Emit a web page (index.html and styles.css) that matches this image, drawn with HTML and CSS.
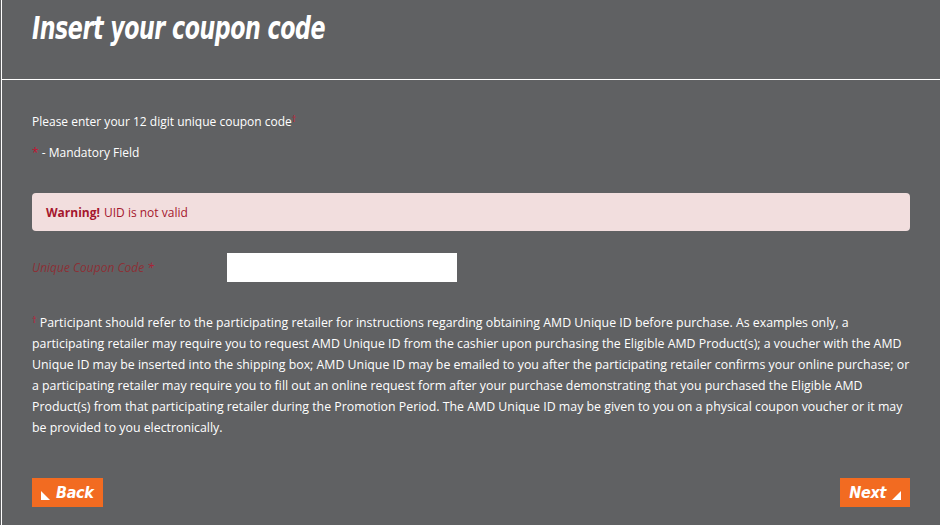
FILE: index.html
```html
<!DOCTYPE html>
<html>
<head>
<meta charset="utf-8">
<link rel="stylesheet" href="styles.css">
</head>
<body>
<div class="page">
  <div class="header">
    <h1 class="title">Insert your coupon code</h1>
  </div>
  <div class="content">
    <p class="intro">Please enter your 12 digit unique coupon code<sup class="req">†</sup></p>
    <p class="mandatory"><span class="req">*</span> - Mandatory Field</p>
    <div class="alert"><strong>Warning!</strong> UID is not valid</div>
    <div class="field">
      <label class="label">Unique Coupon Code <span>*</span></label>
      <input class="input" type="text">
    </div>
    <p class="note"><sup class="req">†</sup> Participant should refer to the participating retailer for instructions regarding obtaining AMD Unique ID before purchase. As examples only, a participating retailer may require you to request AMD Unique ID from the cashier upon purchasing the Eligible AMD Product(s); a voucher with the AMD Unique ID may be inserted into the shipping box; AMD Unique ID may be emailed to you after the participating retailer confirms your online purchase; or a participating retailer may require you to fill out an online request form after your purchase demonstrating that you purchased the Eligible AMD Product(s) from that participating retailer during the Promotion Period. The AMD Unique ID may be given to you on a physical coupon voucher or it may be provided to you electronically.</p>
    <div class="nav">
      <a class="btn"><svg class="tri" width="9" height="9" viewBox="0 0 9 9"><polygon points="0,0 0,9 9,9" fill="#fff"/></svg><span class="btn-text">Back</span></a>
      <a class="btn"><span class="btn-text">Next</span><svg class="tri" width="9" height="9" viewBox="0 0 9 9"><polygon points="9,0 9,9 0,9" fill="#fff"/></svg></a>
    </div>
  </div>
</div>
</body>
</html>
```
FILE: styles.css
```css
html, body {
  margin: 0;
  padding: 0;
  background: #606163;
}
.page {
  margin-left: 1px;
  border-left: 1px solid #fff;
  height: 525px;
  box-sizing: border-box;
  font-family: "Open Sans", sans-serif;
  color: #fff;
}
.header {
  height: 80px;
  border-bottom: 1px solid #fff;
  box-sizing: border-box;
  padding-left: 30px;
}
.title {
  display: inline-block;
  margin: 0;
  padding-top: 8px;
  font-family: "DejaVu Sans Condensed", sans-serif;
  font-weight: bold;
  font-style: italic;
  font-size: 32px;
  letter-spacing: -0.6px;
  line-height: 40px;
  transform: scaleX(0.77);
  transform-origin: left center;
}
.content {
  padding: 0 30px 0 30px;
}
.intro {
  margin: 33px 0 0;
  font-size: 12px;
  line-height: 18px;
}
.req {
  color: #c8102e;
}
sup.req {
  font-size: 9px;
  vertical-align: 4px;
  line-height: 0;
}
.mandatory {
  margin: 13px 0 0;
  font-size: 12px;
  line-height: 18px;
}
.alert {
  margin-top: 31px;
  height: 38px;
  box-sizing: border-box;
  padding: 0 14px;
  display: flex;
  align-items: center;
  background: #f2dede;
  border-radius: 4px;
  color: #a5172e;
  font-size: 12px;
}
.alert strong {
  margin-right: 4px;
}
.field {
  margin-top: 22px;
  display: flex;
  align-items: center;
}
.label {
  width: 195px;
  color: #8c3036;
  font-style: italic;
  font-size: 12px;
}
.label span {
  color: #b01d33;
}
.input {
  width: 230px;
  height: 29px;
  box-sizing: border-box;
  border: none;
  background: #fff;
  margin: 0;
  padding: 0;
}
.note {
  margin: 30px 0 0;
  font-size: 12.35px;
  line-height: 21px;
}
.nav {
  margin-top: 40px;
  display: flex;
  justify-content: space-between;
}
.btn {
  height: 29px;
  box-sizing: border-box;
  padding: 0 9px;
  display: flex;
  align-items: center;
  gap: 6px;
  background: #f26b21;
  color: #fff;
  font-family: "DejaVu Sans Condensed", sans-serif;
  font-weight: bold;
  font-style: italic;
  font-size: 16px;
  letter-spacing: -0.3px;
}
.btn-text {
  line-height: 29px;
}
.tri {
  display: block;
  margin-top: 5px;
}
```
